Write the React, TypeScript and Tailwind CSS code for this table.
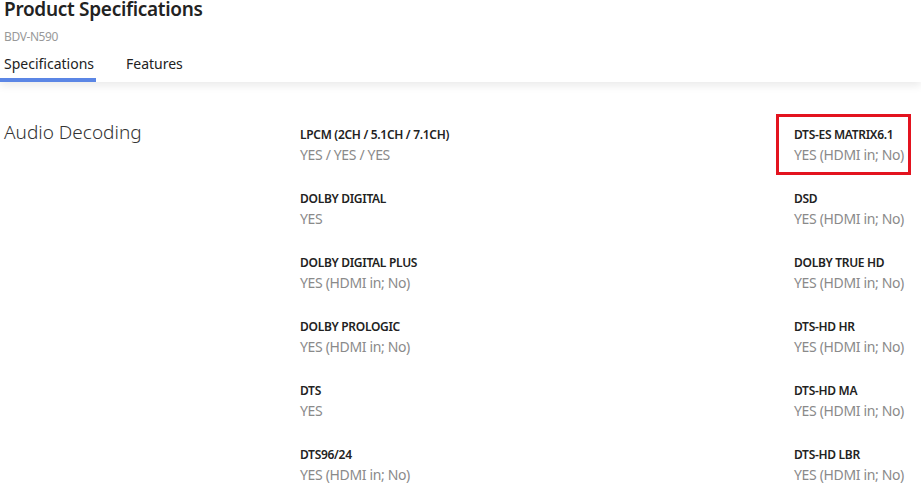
const left = [
  { label: 'LPCM (2CH / 5.1CH / 7.1CH)', value: 'YES / YES / YES' },
  { label: 'DOLBY DIGITAL', value: 'YES' },
  { label: 'DOLBY DIGITAL PLUS', value: 'YES (HDMI in; No)' },
  { label: 'DOLBY PROLOGIC', value: 'YES (HDMI in; No)' },
  { label: 'DTS', value: 'YES' },
  { label: 'DTS96/24', value: 'YES (HDMI in; No)' },
]

const right = [
  { label: 'DTS-ES MATRIX6.1', value: 'YES (HDMI in; No)', highlight: true },
  { label: 'DSD', value: 'YES (HDMI in; No)' },
  { label: 'DOLBY TRUE HD', value: 'YES (HDMI in; No)' },
  { label: 'DTS-HD HR', value: 'YES (HDMI in; No)' },
  { label: 'DTS-HD MA', value: 'YES (HDMI in; No)' },
  { label: 'DTS-HD LBR', value: 'YES (HDMI in; No)' },
]

type Spec = { label: string; value: string; highlight?: boolean }

const SpecItem = ({ spec }: { spec: Spec }) => (
  <div className="relative h-[64px]">
    {spec.highlight && (
      <div className="absolute -left-[18px] -top-[12px] h-[61px] w-[135px] border-[3px] border-[#e3131f]" />
    )}
    <p className="text-[12px] font-semibold leading-[18px] tracking-[-0.3px] text-[#222]">{spec.label}</p>
    <p className="text-[14px] leading-[22px] tracking-[-0.35px] text-[#8a8a8a]">{spec.value}</p>
  </div>
)

const App = () => {
  return (
    <div className="h-[495px] w-[921px] overflow-hidden bg-white font-['Noto_Sans',sans-serif]">
      <div className="relative z-10 bg-white shadow-[0_4px_8px_rgba(0,0,0,0.08)]">
        <h1 className="-mt-[3px] pl-[4px] text-[19px] font-semibold leading-[25px] tracking-[-0.3px] text-[#222]">
          Product Specifications
        </h1>
        <p className="mt-[7px] pl-[4px] text-[12px] leading-[16px] tracking-[-0.4px] text-[#999]">BDV-N590</p>
        <div className="mt-[9px] flex">
          <div className="w-[96px] border-b-[4px] border-[#5b86e5] pb-[4px] pl-[4px] text-[14px] leading-[20px] text-[#222]">
            Specifications
          </div>
          <div className="ml-[30px] pb-[4px] text-[14px] leading-[20px] text-[#222]">Features</div>
        </div>
      </div>
      <div className="flex pt-[38px]">
        <h2 className="w-[300px] pl-[4px] text-[19px] font-light leading-[24px] text-[#333]">Audio Decoding</h2>
        <div className="w-[494px] pt-[6px]">
          {left.map((s) => (
            <SpecItem key={s.label} spec={s} />
          ))}
        </div>
        <div className="flex-1 pt-[6px]">
          {right.map((s) => (
            <SpecItem key={s.label} spec={s} />
          ))}
        </div>
      </div>
    </div>
  )
}

export default App
